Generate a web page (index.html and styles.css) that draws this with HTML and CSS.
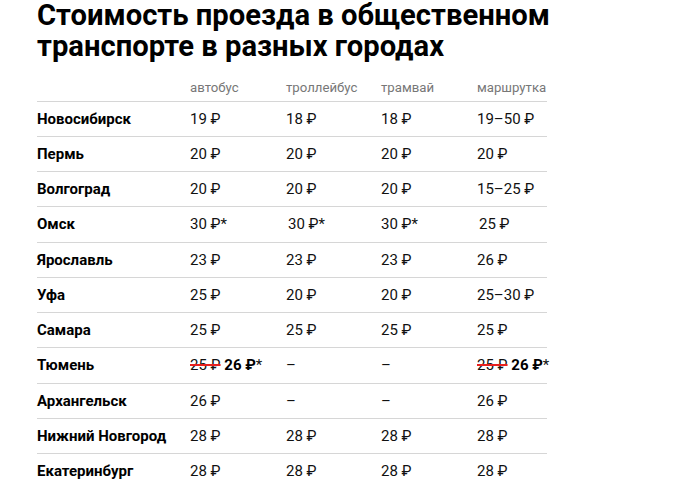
FILE: index.html
```html
<!DOCTYPE html>
<html lang="ru">
<head>
<meta charset="utf-8">
<link rel="stylesheet" href="styles.css">
</head>
<body>
<div class="page">
  <h1 class="title">Стоимость проезда в общественном транспорте в разных городах</h1>
  <div class="table">
    <div class="row head">
      <div class="cell"></div>
      <div class="cell">автобус</div>
      <div class="cell">троллейбус</div>
      <div class="cell">трамвай</div>
      <div class="cell">маршрутка</div>
    </div>
    <div class="row"><div class="cell city">Новосибирск</div><div class="cell">19 ₽</div><div class="cell">18 ₽</div><div class="cell">18 ₽</div><div class="cell">19–50 ₽</div></div>
    <div class="row"><div class="cell city">Пермь</div><div class="cell">20 ₽</div><div class="cell">20 ₽</div><div class="cell">20 ₽</div><div class="cell">20 ₽</div></div>
    <div class="row"><div class="cell city">Волгоград</div><div class="cell">20 ₽</div><div class="cell">20 ₽</div><div class="cell">20 ₽</div><div class="cell">15–25 ₽</div></div>
    <div class="row"><div class="cell city">Омск</div><div class="cell">30 ₽*</div><div class="cell shift">30 ₽*</div><div class="cell">30 ₽*</div><div class="cell shift">25 ₽</div></div>
    <div class="row"><div class="cell city">Ярославль</div><div class="cell">23 ₽</div><div class="cell">23 ₽</div><div class="cell">23 ₽</div><div class="cell">26 ₽</div></div>
    <div class="row"><div class="cell city">Уфа</div><div class="cell">25 ₽</div><div class="cell">20 ₽</div><div class="cell">20 ₽</div><div class="cell">25–30 ₽</div></div>
    <div class="row"><div class="cell city">Самара</div><div class="cell">25 ₽</div><div class="cell">25 ₽</div><div class="cell">25 ₽</div><div class="cell">25 ₽</div></div>
    <div class="row"><div class="cell city">Тюмень</div><div class="cell"><span class="old">25 ₽</span> <b class="new">26 ₽</b>*</div><div class="cell">–</div><div class="cell">–</div><div class="cell"><span class="old">25 ₽</span> <b class="new">26 ₽</b>*</div></div>
    <div class="row"><div class="cell city">Архангельск</div><div class="cell">26 ₽</div><div class="cell">–</div><div class="cell">–</div><div class="cell">26 ₽</div></div>
    <div class="row"><div class="cell city">Нижний Новгород</div><div class="cell">28 ₽</div><div class="cell">28 ₽</div><div class="cell">28 ₽</div><div class="cell">28 ₽</div></div>
    <div class="row last"><div class="cell city">Екатеринбург</div><div class="cell">28 ₽</div><div class="cell">28 ₽</div><div class="cell">28 ₽</div><div class="cell">28 ₽</div></div>
  </div>
</div>
</body>
</html>
```

FILE: styles.css
```css
html, body {
  margin: 0;
  padding: 0;
  background: #fff;
}
body {
  font-family: Roboto, "Liberation Sans", sans-serif;
  color: #111;
}
.page {
  padding: 0 0 0 37px;
}
.title {
  margin: 0;
  font-size: 29.2px;
  line-height: 31px;
  font-weight: 700;
  color: #000;
  width: 540px;
}
.table {
  width: 510px;
  margin-top: 10.5px;
}
.row {
  display: grid;
  grid-template-columns: 153px 96px 95px 96px 1fr;
  align-items: center;
  height: 34.26px;
  border-bottom: 1px solid #d6d6d6;
  font-size: 15px;
  white-space: nowrap;
}
.row.head {
  height: 22px;
  align-items: end;
  padding-bottom: 6px;
  font-size: 13.2px;
  color: #777;
}
.row.last {
  border-bottom: none;
}
.cell.city {
  font-weight: 700;
  color: #000;
}
.cell.shift {
  padding-left: 2px;
}
.old {
  text-decoration: line-through;
  text-decoration-color: #e8201f;
  text-decoration-thickness: 2px;
}
.new {
  font-weight: 700;
  color: #000;
}
```
